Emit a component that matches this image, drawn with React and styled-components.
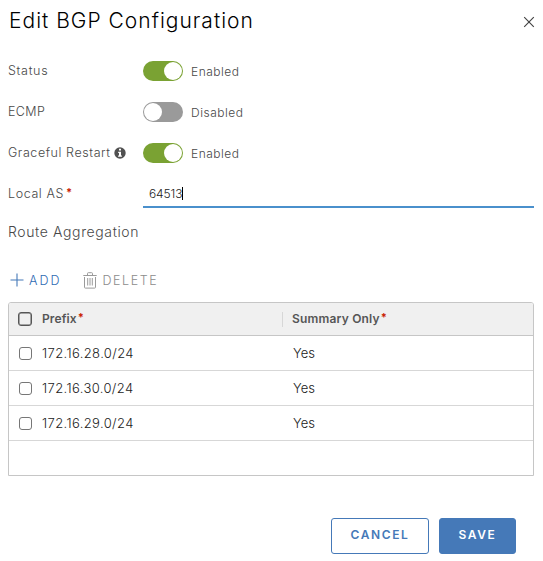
import React from "react";
import styled, { createGlobalStyle } from "styled-components";

const GlobalStyle = createGlobalStyle`
  *, *::before, *::after { box-sizing: border-box; }
  body {
    margin: 0;
    background: #fff;
    font-family: Inter, "Liberation Sans", sans-serif;
    font-weight: 300;
  }
`;

const Dialog = styled.main`
  width: 543px;
  height: 561px;
  display: flex;
  flex-direction: column;
  padding: 0 9px 0 8px;
  background: #fff;
  color: #484848;
  overflow: hidden;
`;

const Header = styled.header`
  height: 50px;
  flex: none;
  display: flex;
  justify-content: space-between;
`;

const Title = styled.h1`
  margin: 0 0 0 1px;
  height: 42px;
  line-height: 42px;
  font-size: 21px;
  font-weight: 300;
  letter-spacing: 1px;
  color: #000;
  white-space: nowrap;
`;

const CloseButton = styled.button`
  width: 12px;
  height: 12px;
  margin: 16px -1px 0 0;
  padding: 0;
  border: 0;
  background: none;
  svg { display: block; }
`;

const Field = styled.div`
  display: grid;
  grid-template-columns: 135px 1fr;
  align-items: center;
  height: 41px;
  flex: none;
`;

const Label = styled.label`
  display: flex;
  align-items: center;
  font-size: 12.5px;
  line-height: 20px;
  letter-spacing: ${(p) => p.$spacing || 0.4}px;
  white-space: nowrap;
  svg { margin-left: 3px; }
`;

const ToggleGroup = styled.div`
  display: flex;
  align-items: center;
  gap: 8px;
`;

const Track = styled.button`
  width: 40px;
  height: 20px;
  padding: 1px;
  border: 0;
  border-radius: 10px;
  display: flex;
  justify-content: ${(p) => (p.$on ? "flex-end" : "flex-start")};
  background: ${(p) => (p.$on ? "#7aa233" : "#9a9a9a")};
`;

const Knob = styled.span`
  width: 18px;
  height: 18px;
  border-radius: 50%;
  background: #fff;
`;

const ToggleText = styled.span`
  padding-top: 2px;
  font-size: 12px;
  line-height: 18px;
  letter-spacing: ${(p) => p.$spacing}px;
`;

const Required = styled.span`
  width: 4px;
  margin: -3px 0 0 ${(p) => p.$gap || 2}px;
  color: #c92100;
  font-size: 11px;
  font-weight: 700;
  letter-spacing: 0;
`;

const TextInput = styled.div`
  height: 26px;
  margin-top: 3px;
  padding: 0 6px 2px;
  display: flex;
  align-items: center;
  border-bottom: 2px solid #4a90cc;
  color: #222;
  font-size: 12px;
  letter-spacing: -0.1px;
`;

const Caret = styled.span`
  width: 1px;
  height: 13px;
  background: #000;
`;

const SectionTitle = styled.h2`
  margin: 2px 0 0;
  height: 32px;
  line-height: 32px;
  flex: none;
  font-size: 14px;
  font-weight: 300;
  letter-spacing: 0.62px;
`;

const Toolbar = styled.div`
  display: flex;
  height: 28px;
  margin-top: 18px;
  flex: none;
`;

const ToolButton = styled.button`
  display: flex;
  align-items: center;
  padding: 0;
  margin-left: ${(p) => p.$offset}px;
  border: 0;
  background: none;
  font: inherit;
  font-size: 12.5px;
  letter-spacing: ${(p) => p.$spacing}px;
  color: ${(p) => (p.$muted ? "#8c8c8c" : "#2f6bb3")};
  svg { margin-right: 5px; }
`;

const Table = styled.section`
  flex: none;
  height: 174px;
  margin-top: 8px;
  border: 1px solid #c6c6c6;
  border-radius: 3px 3px 0 0;
  overflow: hidden;
`;

const Row = styled.div`
  display: grid;
  grid-template-columns: 33px 240px 1fr;
  align-items: center;
  height: 35px;
  border-bottom: 1px solid #d7d7d7;
  color: #222;
  font-size: 13px;
`;

const HeaderRow = styled(Row)`
  height: 33px;
  background: #f0f0f0;
  border-bottom-color: #c6c6c6;
  color: #565656;
  font-size: 12px;
  font-weight: 600;
`;

const Cell = styled.div`
  display: flex;
  align-items: center;
  padding: 0 0 1px ${(p) => p.$inset || 0}px;
  letter-spacing: ${(p) => p.$spacing || 0}px;
`;

const DividedCell = styled(Cell)`
  height: 15px;
  border-left: 1px solid #d7d7d7;
`;

const Checkbox = styled.span`
  width: ${(p) => (p.$header ? 14 : 13)}px;
  height: ${(p) => (p.$header ? 14 : 13)}px;
  margin-left: ${(p) => (p.$header ? 9 : 10)}px;
  margin-top: ${(p) => (p.$header ? -1 : 0)}px;
  border: ${(p) => (p.$header ? "1px solid #565656" : "1px solid #767676")};
  box-shadow: ${(p) => (p.$header ? "inset 0 0 0 0.5px #565656" : "none")};
  border-radius: 3px;
  background: ${(p) => (p.$header ? "transparent" : "#fff")};
`;

const Footer = styled.footer`
  display: flex;
  justify-content: flex-end;
  gap: 10px;
  margin-top: 42px;
  padding-right: 18px;
`;

const Button = styled.button`
  width: ${(p) => (p.$primary ? 77 : 98)}px;
  height: 36px;
  padding: 0 0 3px;
  border: 1px solid #4579b8;
  border-radius: 3px;
  background: ${(p) => (p.$primary ? "#4579b8" : "#fff")};
  color: ${(p) => (p.$primary ? "#fff" : "#4579b8")};
  font: inherit;
  font-size: 12px;
  font-weight: 600;
  letter-spacing: 1.6px;
`;

const CloseIcon = () => (
  <svg width="12" height="12" viewBox="0 0 12 12" stroke="#444" strokeWidth="1.15">
    <path d="M1.2 1.2 10.8 10.8M10.8 1.2 1.2 10.8" />
  </svg>
);

const InfoIcon = () => (
  <svg width="12" height="12" viewBox="0 0 12 12">
    <circle cx="6" cy="6" r="5.7" fill="#505050" />
    <path d="M5 1.8h2v1.7H5zM4.2 4.7H7v3.7h.9v1.3H4.1V8.4H5V6h-.8z" fill="#fff" />
  </svg>
);

const PlusIcon = () => (
  <svg width="14" height="14" viewBox="0 0 14 14" stroke="#4579b8" strokeWidth="1.1">
    <path d="M.5 7h13M7 .5v13" />
  </svg>
);

const TrashIcon = () => (
  <svg width="14" height="17" viewBox="0 0 14 17" fill="none" stroke="#9a9a9a">
    <path d="M.3 3.5h13.4M4.5 3.3V1.5q0-.8.8-.8h3.4q.8 0 .8.8v1.8M1.5 5v10.3q0 .8.8.8h9.4q.8 0 .8-.8V5M4.7 6v7.5M7 6v7.5M9.3 6v7.5" />
  </svg>
);

const toggles = [
  { label: "Status", on: true, spacing: 0.7 },
  { label: "ECMP", on: false, spacing: 0.4 },
  { label: "Graceful Restart", on: true, info: true, spacing: 0.57 },
];

const prefixes = ["172.16.28.0/24", "172.16.30.0/24", "172.16.29.0/24"];

export default function App() {
  return (
    <>
      <GlobalStyle />
      <Dialog>
        <Header>
          <Title>Edit BGP Configuration</Title>
          <CloseButton aria-label="Close"><CloseIcon /></CloseButton>
        </Header>
        {toggles.map((t) => (
          <Field key={t.label}>
            <Label $spacing={t.spacing}>{t.label}{t.info && <InfoIcon />}</Label>
            <ToggleGroup>
              <Track $on={t.on} aria-label={t.label}><Knob /></Track>
              <ToggleText $spacing={0.5}>{t.on ? "Enabled" : "Disabled"}</ToggleText>
            </ToggleGroup>
          </Field>
        ))}
        <Field>
          <Label $spacing={0.6}>Local AS<Required>*</Required></Label>
          <TextInput>64513<Caret /></TextInput>
        </Field>
        <SectionTitle>Route Aggregation</SectionTitle>
        <Toolbar>
          <ToolButton $offset={2} $spacing={2}><PlusIcon />ADD</ToolButton>
          <ToolButton $offset={22} $spacing={1.6} $muted><TrashIcon />DELETE</ToolButton>
        </Toolbar>
        <Table>
          <HeaderRow>
            <Checkbox $header />
            <Cell $spacing={0.1}>Prefix<Required $gap={1}>*</Required></Cell>
            <DividedCell $inset={9} $spacing={0.18}>Summary Only<Required $gap={1}>*</Required></DividedCell>
          </HeaderRow>
          {prefixes.map((prefix) => (
            <Row key={prefix}>
              <Checkbox />
              <Cell $spacing={0.38}>{prefix}</Cell>
              <Cell $inset={11}>Yes</Cell>
            </Row>
          ))}
        </Table>
        <Footer>
          <Button>CANCEL</Button>
          <Button $primary>SAVE</Button>
        </Footer>
      </Dialog>
    </>
  );
}
